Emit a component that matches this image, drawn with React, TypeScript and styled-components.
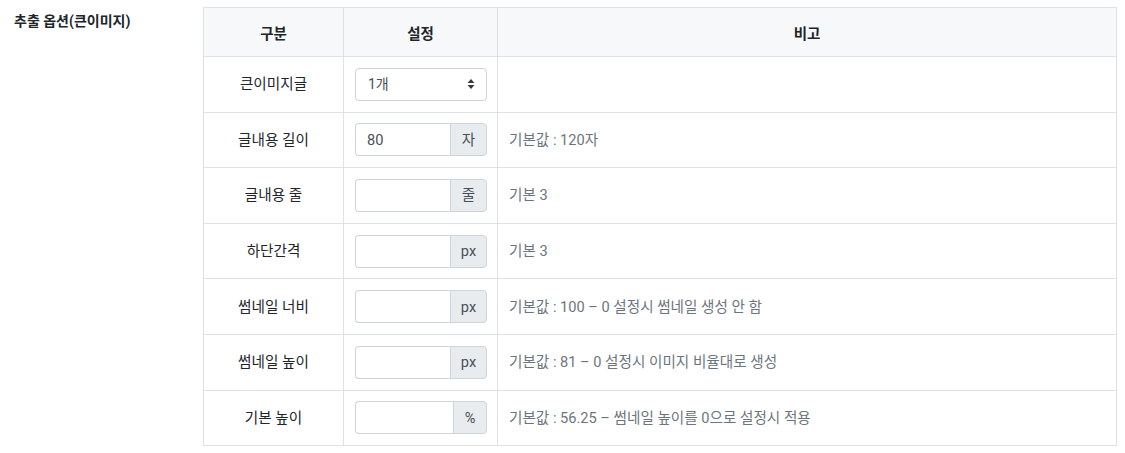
import styled, { createGlobalStyle } from "styled-components";

const GlobalStyle = createGlobalStyle`
  body {
    margin: 0;
    background: #fff;
    font-family: Roboto, "Noto Sans CJK KR", sans-serif;
    font-size: 14px;
    color: #212529;
  }
`;

const Page = styled.div`
  display: flex;
  align-items: flex-start;
  padding-top: 7px;
`;

const Label = styled.div`
  width: 189px;
  padding: 4px 0 0 14px;
  font-size: 14px;
  font-weight: 700;
  line-height: 20px;
  color: #212529;
`;

const Table = styled.table`
  width: 914px;
  border-collapse: collapse;
  table-layout: fixed;
`;

const Th = styled.th<{ w?: number }>`
  width: ${(p) => (p.w ? `${p.w}px` : "auto")};
  box-sizing: border-box;
  height: 49px;
  padding: 0 12px;
  background: #f7f8fa;
  border: 1px solid #dee2e6;
  font-weight: 700;
  font-size: 14.5px;
  text-align: center;
  vertical-align: middle;
`;

const Td = styled.td<{ align?: string }>`
  height: 55.6px;
  box-sizing: border-box;
  padding: 0 11px;
  border: 1px solid #dee2e6;
  text-align: ${(p) => p.align ?? "left"};
  vertical-align: middle;
  font-size: 14.6px;
  line-height: 20px;
`;

const Note = styled.span`
  color: #6c757d;
`;

const Select = styled.div`
  display: flex;
  align-items: center;
  justify-content: space-between;
  width: 132px;
  height: 33px;
  box-sizing: border-box;
  padding: 0 11px 0 12px;
  border: 1px solid #ced4da;
  border-radius: 4px;
  color: #495057;
  background: #fff;
  font-size: 14px;
`;

const Group = styled.div`
  display: flex;
  width: 132px;
  height: 33px;
`;

const Input = styled.input`
  flex: 1;
  min-width: 0;
  box-sizing: border-box;
  height: 100%;
  padding: 0 11px;
  border: 1px solid #ced4da;
  border-right: none;
  border-radius: 4px 0 0 4px;
  font-family: inherit;
  font-size: 14.6px;
  color: #495057;
  outline: none;
`;

const Addon = styled.span<{ w: number }>`
  display: flex;
  align-items: center;
  justify-content: center;
  width: ${(p) => p.w}px;
  box-sizing: border-box;
  border: 1px solid #ced4da;
  border-radius: 0 4px 4px 0;
  background: #e9ecef;
  color: #495057;
  font-size: 14.6px;
`;

const Arrows = () => (
  <svg width="8" height="12" viewBox="0 0 8 12">
    <path d="M4 1 L7.5 5 L0.5 5 Z M4 11 L7.5 7 L0.5 7 Z" fill="#343a40" />
  </svg>
);

const rows = [
  { name: "글내용 길이", value: "80", unit: "자", note: "기본값 : 120자" },
  { name: "글내용 줄", value: "", unit: "줄", note: "기본 3" },
  { name: "하단간격", value: "", unit: "px", note: "기본 3" },
  { name: "썸네일 너비", value: "", unit: "px", note: "기본값 : 100 – 0 설정시 썸네일 생성 안 함" },
  { name: "썸네일 높이", value: "", unit: "px", note: "기본값 : 81 – 0 설정시 이미지 비율대로 생성" },
  { name: "기본 높이", value: "", unit: "%", note: "기본값 : 56.25 – 썸네일 높이를 0으로 설정시 적용" },
];

export default function App() {
  return (
    <>
      <GlobalStyle />
      <Page>
        <Label>추출 옵션(큰이미지)</Label>
        <Table>
          <thead>
            <tr>
              <Th w={140}>구분</Th>
              <Th w={154}>설정</Th>
              <Th>비고</Th>
            </tr>
          </thead>
          <tbody>
            <tr>
              <Td align="center">큰이미지글</Td>
              <Td>
                <Select>
                  <span>1개</span>
                  <Arrows />
                </Select>
              </Td>
              <Td />
            </tr>
            {rows.map((r) => (
              <tr key={r.name}>
                <Td align="center">{r.name}</Td>
                <Td>
                  <Group>
                    <Input defaultValue={r.value} />
                    <Addon w={r.unit === "%" ? 34 : 37}>{r.unit}</Addon>
                  </Group>
                </Td>
                <Td>
                  <Note>{r.note}</Note>
                </Td>
              </tr>
            ))}
          </tbody>
        </Table>
      </Page>
    </>
  );
}
